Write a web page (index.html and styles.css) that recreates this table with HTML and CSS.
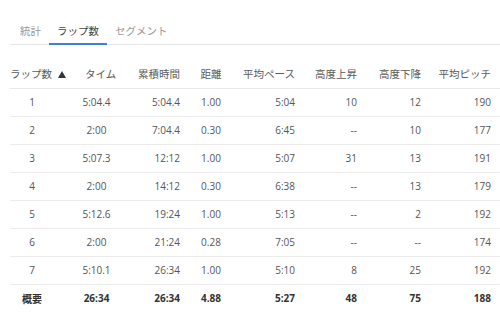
FILE: index.html
```html
<!DOCTYPE html>
<html lang="ja">
<head>
  <meta charset="UTF-8">
  <title>ラップ数</title>
  <link rel="stylesheet" href="styles.css">
</head>
<body>
  <div class="panel">

    <!-- タブ -->
    <div class="tabs">
      <span class="tab">統計</span>
      <span class="tab tab--active">ラップ数</span>
      <span class="tab">セグメント</span>
    </div>

    <!-- ラップ一覧 -->
    <table class="laps">
      <colgroup>
        <col class="c1"><col class="c2"><col class="c3"><col class="c4">
        <col class="c5"><col class="c6"><col class="c7"><col class="c8">
      </colgroup>
      <thead>
        <tr>
          <th>ラップ数 <span class="sort-up"></span></th>
          <th>タイム</th>
          <th>累積時間</th>
          <th>距離</th>
          <th>平均ペース</th>
          <th>高度上昇</th>
          <th>高度下降</th>
          <th>平均ピッチ</th>
        </tr>
      </thead>
      <tbody>
        <tr><td>1</td><td>5:04.4</td><td>5:04.4</td><td>1.00</td><td>5:04</td><td>10</td><td>12</td><td>190</td></tr>
        <tr><td>2</td><td>2:00</td><td>7:04.4</td><td>0.30</td><td>6:45</td><td>--</td><td>10</td><td>177</td></tr>
        <tr><td>3</td><td>5:07.3</td><td>12:12</td><td>1.00</td><td>5:07</td><td>31</td><td>13</td><td>191</td></tr>
        <tr><td>4</td><td>2:00</td><td>14:12</td><td>0.30</td><td>6:38</td><td>--</td><td>13</td><td>179</td></tr>
        <tr><td>5</td><td>5:12.6</td><td>19:24</td><td>1.00</td><td>5:13</td><td>--</td><td>2</td><td>192</td></tr>
        <tr><td>6</td><td>2:00</td><td>21:24</td><td>0.28</td><td>7:05</td><td>--</td><td>--</td><td>174</td></tr>
        <tr><td>7</td><td>5:10.1</td><td>26:34</td><td>1.00</td><td>5:10</td><td>8</td><td>25</td><td>192</td></tr>
        <tr class="summary"><td>概要</td><td>26:34</td><td>26:34</td><td>4.88</td><td>5:27</td><td>48</td><td>75</td><td>188</td></tr>
      </tbody>
    </table>

  </div>
</body>
</html>
```

FILE: styles.css
```css
/* ---------- BASE ---------- */
* {
  box-sizing: border-box;
  margin: 0;
  padding: 0;
}
body {
  background: #fff;
  color: #555;
  font-family: "Open Sans", "Noto Sans CJK JP", sans-serif;
  font-size: 10px;
}
.panel {
  padding: 20px 0 0 10px;
}

/* ---------- TABS ---------- */
.tabs {
  display: flex;
  height: 25px;
  padding-left: 2px;
  border-bottom: 1px solid #e6e6e6;
}
.tab {
  padding: 0 8px;
  height: 25px;
  line-height: 23px;
  font-size: 10.5px;
  color: #999;
}
.tab--active {
  color: #444;
  border-bottom: 2px solid #3d7fd6;
}

/* ---------- TABLE ---------- */
.laps {
  width: 490px;
  margin-top: 15px;
  border-collapse: collapse;
  table-layout: fixed;
}
.laps .c1 { width: 66px; }
.laps .c2 { width: 52px; }
.laps .c3 { width: 62px; }
.laps .c4 { width: 42px; }
.laps .c5 { width: 73px; }
.laps .c6 { width: 63px; }
.laps .c7 { width: 63px; }
.laps .c8 { width: 69px; }

.laps th {
  height: 28px;
  font-size: 10.5px;
  font-weight: 400;
  color: #5a5a5a;
  white-space: nowrap;
  border-bottom: 1px solid #e8e8e8;
  padding-bottom: 1px;
}
.laps td {
  height: 28px;
  color: #555;
  white-space: nowrap;
  border-bottom: 1px solid #ececec;
}
.laps tr.summary td {
  font-weight: 700;
  color: #333;
  border-bottom: none;
}

/* 列ごとの揃え */
.laps th:nth-child(1) { text-align: left; }
.laps td:nth-child(1) { text-align: center; padding-right: 22px; }
.laps th:nth-child(2) { text-align: left; padding-left: 9px; }
.laps td:nth-child(2) { text-align: center; padding-right: 11px; }
.laps th:nth-child(3), .laps td:nth-child(3) { text-align: right; padding-right: 10px; }
.laps th:nth-child(4), .laps td:nth-child(4) { text-align: center; }
.laps th:nth-child(5), .laps td:nth-child(5) { text-align: right; padding-right: 10px; }
.laps th:nth-child(6), .laps td:nth-child(6) { text-align: right; padding-right: 11px; }
.laps th:nth-child(7), .laps td:nth-child(7) { text-align: right; padding-right: 10px; }
.laps th:nth-child(8), .laps td:nth-child(8) { text-align: right; padding-right: 9px; }

/* ソート矢印 */
.sort-up {
  display: inline-block;
  width: 0;
  height: 0;
  margin-left: 3px;
  border-left: 4px solid transparent;
  border-right: 4px solid transparent;
  border-bottom: 7px solid #333;
  vertical-align: 0;
}
```
